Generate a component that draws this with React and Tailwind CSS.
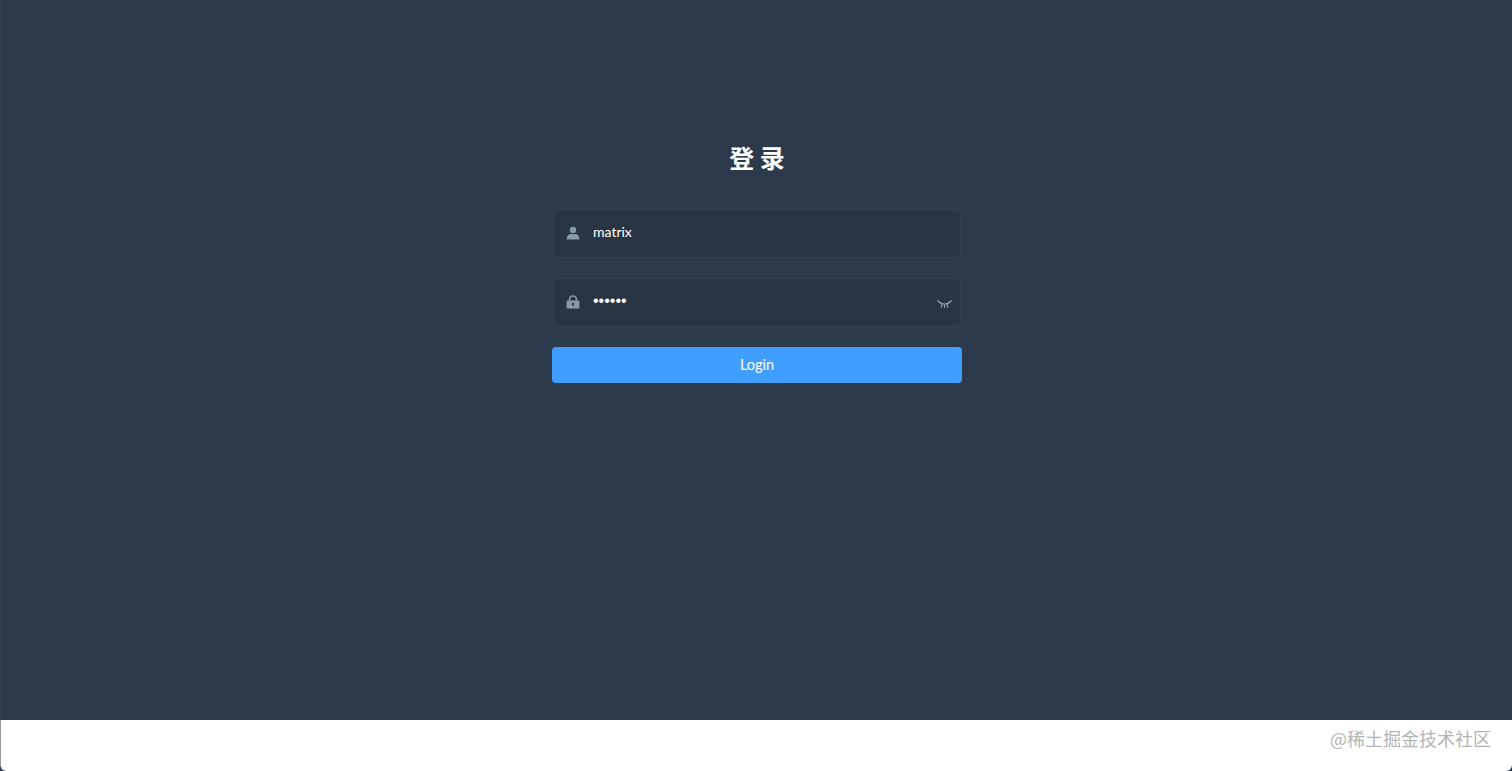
const cjk = "font-['Noto_Sans_CJK_SC','Noto_Sans',sans-serif]";
const latin = "font-['Lato','Noto_Sans_CJK_SC',sans-serif]";

function UserIcon() {
  return (
    <svg width="14" height="14" viewBox="0 0 14 14" fill="#889aa4" aria-hidden="true">
      <ellipse cx="7" cy="3.9" rx="3.2" ry="3.2" />
      <path d="M.6 13.4c0-3.6 2.4-5.3 4.2-5.3h4.4c1.8 0 4.2 1.7 4.2 5.3z" />
    </svg>
  );
}

function LockIcon() {
  return (
    <svg width="14" height="14" viewBox="0 0 14 14" aria-hidden="true">
      <path d="M3.6 6V4.3a3.4 3.4 0 0 1 6.8 0V6" fill="none" stroke="#889aa4" strokeWidth="1.5" />
      <rect x="0.6" y="5.6" width="12.8" height="8" rx="1.2" fill="#889aa4" />
      <circle cx="7" cy="8.9" r="1.2" fill="#2a3543" />
      <rect x="6.5" y="9" width="1" height="2.4" fill="#2a3543" />
    </svg>
  );
}

function EyeClosedIcon() {
  return (
    <svg width="15" height="9" viewBox="0 0 15 9" fill="none" stroke="#8f9fab" strokeWidth="1.2" aria-hidden="true">
      <path d="M1.5 1.5C4.5 5 10.5 5 13.5 1.5" />
      <path d="M0.2 0.2 3.2 3.2M14.8 0.2 11.8 3.2M5 4 4.2 7.5M10 4 10.8 7.5M7.5 4.4V8" />
    </svg>
  );
}

function Field({ icon, value, type = "text", textClass, trailing }) {
  return (
    <div className="flex h-[49px] items-center rounded-[5px] border border-[rgba(255,255,255,0.07)] bg-[#2a3543]">
      <span className="mb-0.5 ml-3 flex w-[14px] shrink-0 justify-center">{icon}</span>
      <input
        readOnly
        type={type}
        value={value}
        className={`ml-[13px] h-full min-w-0 flex-1 bg-transparent pb-1 text-white outline-none ${textClass}`}
      />
      {trailing && <span className="mr-2 mt-[3px] flex shrink-0">{trailing}</span>}
    </div>
  );
}

export default function App() {
  return (
    <div className={`flex h-[771px] flex-col overflow-hidden bg-[#2d3a4b] ${cjk}`}>
      <main className="h-[720px] border-l border-[#364354] pt-[141px] pl-px">
        <form className="mx-auto flex w-[410px] flex-col">
          <h1 className="h-[68px] text-center text-[25px] leading-[33px] font-bold text-white">登 录</h1>
          <div className="flex flex-col gap-5 px-px">
            <Field icon={<UserIcon />} value="matrix" textClass={`text-sm ${latin}`} />
            <Field
              icon={<LockIcon />}
              value="matrix"
              type="password"
              textClass="text-base font-['Liberation_Sans',sans-serif]"
              trailing={<EyeClosedIcon />}
            />
          </div>
          <button type="button" className={`mt-5 h-9 rounded bg-[#409eff] text-[14.5px] text-white ${latin}`}>
            Login
          </button>
        </form>
      </main>
      <footer className="flex flex-1 justify-end rounded-b-md border-l border-[#9a9a9a] bg-white pt-[5px] pr-[21px]">
        <span className="text-lg leading-[26px] text-[#b4b4b4]">@稀土掘金技术社区</span>
      </footer>
    </div>
  );
}
